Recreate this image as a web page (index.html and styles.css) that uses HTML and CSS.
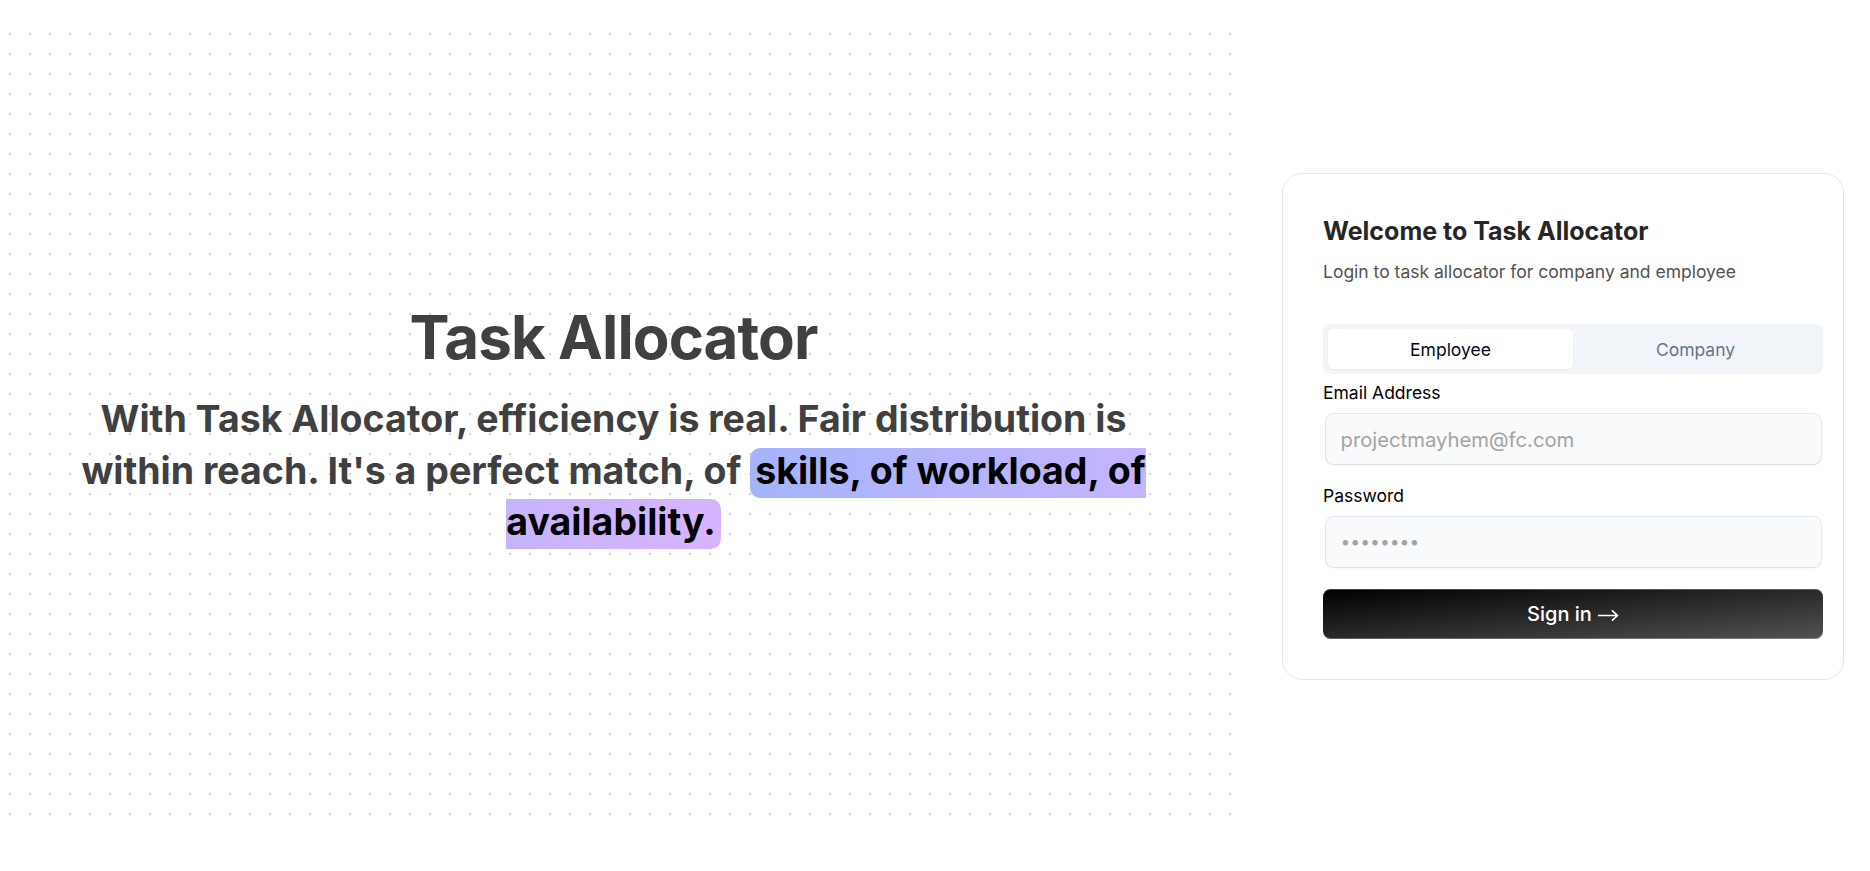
FILE: index.html
```html
<!DOCTYPE html>
<html lang="en">
<head>
<meta charset="utf-8">
<title>Task Allocator</title>
<link rel="stylesheet" href="styles.css">
</head>
<body>
<main class="page">
  <section class="hero">
    <div class="hero-inner">
      <h1 class="hero-title">Task Allocator</h1>
      <p class="hero-text">With Task Allocator, efficiency is real. Fair distribution is within reach. It's a perfect match, of <span class="highlight">skills, of workload, of availability.</span></p>
    </div>
  </section>
  <aside class="card">
    <div class="card-body">
      <h2 class="card-title">Welcome to Task Allocator</h2>
      <p class="card-sub">Login to task allocator for company and employee</p>
      <div class="tabs">
        <div class="tab-list">
          <button class="tab tab-active" type="button">Employee</button>
          <button class="tab" type="button">Company</button>
        </div>
        <form class="form">
          <div class="field">
            <label class="label" for="email">Email Address</label>
            <div class="input-wrap"><input class="input input-email" id="email" type="email" placeholder="projectmayhem@fc.com"></div>
          </div>
          <div class="field">
            <label class="label" for="password">Password</label>
            <div class="input-wrap"><input class="input" id="password" type="password" placeholder="••••••••"></div>
          </div>
          <button class="submit" type="button">Sign in<svg class="arrow" width="21" height="12" viewBox="0 0 21 12" aria-hidden="true"><path d="M0.5 6.5 H19.5 M14.5 1.8 L19.5 6.5 L14.5 11.2" fill="none" stroke="#fff" stroke-width="1.7" stroke-linecap="round" stroke-linejoin="round"/></svg></button>
        </form>
      </div>
    </div>
  </aside>
</main>
</body>
</html>
```

FILE: styles.css
```css
* { box-sizing: border-box; }
html, body { margin: 0; padding: 0; background: #fff; }
body { font-family: Inter, "Noto Sans", "Liberation Sans", sans-serif; color: #000; }

.page {
  display: flex;
  align-items: center;
  margin-top: 24px;
}

.hero {
  flex: 0 0 1240px;
  height: 800px;
  display: flex;
  align-items: center;
  justify-content: center;
  padding-right: 13px;
  background-image: radial-gradient(circle, #d4d4d4 1.3px, transparent 1.4px);
  background-size: 20px 20px;
  background-position: 0 0;
}

.hero-inner {
  max-width: 1120px;
  padding: 0 20px;
  text-align: center;
}

.hero-title {
  margin: 0 0 18px;
  font-size: 60px;
  line-height: 75px;
  font-weight: 700;
  letter-spacing: -0.9px;
  color: #404040;
}

.hero-text {
  margin: 0 auto;
  font-size: 37.5px;
  line-height: 1.375;
  font-weight: 700;
  color: #404040;
}

.highlight {
  color: #000;
  padding: 0 5px 5px;
  border-radius: 10px;
  background-image: linear-gradient(to right, #a5b4fc, #d8b4fe);
}

.card {
  margin-left: 42px;
  margin-top: 5px;
  width: 562px;
  border: 1px solid #e2e8f0;
  border-radius: 20px;
  background: #fff;
  padding: 40px 20px 40px 40px;
}

.card-body { width: 500px; }

.card-title {
  margin: 0;
  font-size: 25px;
  line-height: 35px;
  font-weight: 700;
  color: #262626;
}

.card-sub {
  margin: 10px 0 0;
  font-size: 17.5px;
  line-height: 25px;
  color: #525252;
}

.tabs { margin-top: 40px; }

.tab-list {
  display: grid;
  grid-template-columns: 1fr 1fr;
  height: 50px;
  padding: 5px;
  border-radius: 7.5px;
  background: #f1f5f9;
}

.tab {
  border: 0;
  background: transparent;
  font-family: inherit;
  font-size: 17.5px;
  font-weight: 400;
  color: #64748b;
  border-radius: 5px;
  cursor: pointer;
}

.tab-active {
  background: #fff;
  color: #020817;
  box-shadow: 0 1px 2px rgba(0,0,0,0.05);
}

.form { margin-top: 10px; }

.field {
  display: flex;
  flex-direction: column;
  gap: 10px;
  margin-bottom: 20px;
}

.label {
  font-size: 17.5px;
  line-height: 17.5px;
  font-weight: 400;
  color: #000;
}

.input-wrap {
  padding: 2.5px;
  border-radius: 10px;
}

.input {
  display: block;
  width: 100%;
  height: 50px;
  border: 0;
  border-radius: 7.5px;
  background: #f8fafc;
  padding: 10px 15px;
  font-family: inherit;
  font-size: 17.5px;
  color: #000;
  box-shadow: 0 2px 3px -1px rgba(0,0,0,0.06), 0 0 0 1px #e2e8f0;
  outline: none;
}

.input-email { font-size: 20.25px; }

.input::placeholder { color: #a3a3a3; }

.submit {
  display: flex;
  align-items: center;
  justify-content: center;
  gap: 6px;
  width: 100%;
  height: 50px;
  border: 0;
  border-radius: 7.5px;
  background: linear-gradient(to bottom right, #000, #525252);
  color: #fff;
  font-family: inherit;
  font-size: 20px;
  font-weight: 500;
  box-shadow: inset 0 1px 0 rgba(255,255,255,0.25), inset 0 -1px 0 rgba(255,255,255,0.25);
  cursor: pointer;
}

.arrow {
  display: block;
  margin-top: 1px;
}
```
